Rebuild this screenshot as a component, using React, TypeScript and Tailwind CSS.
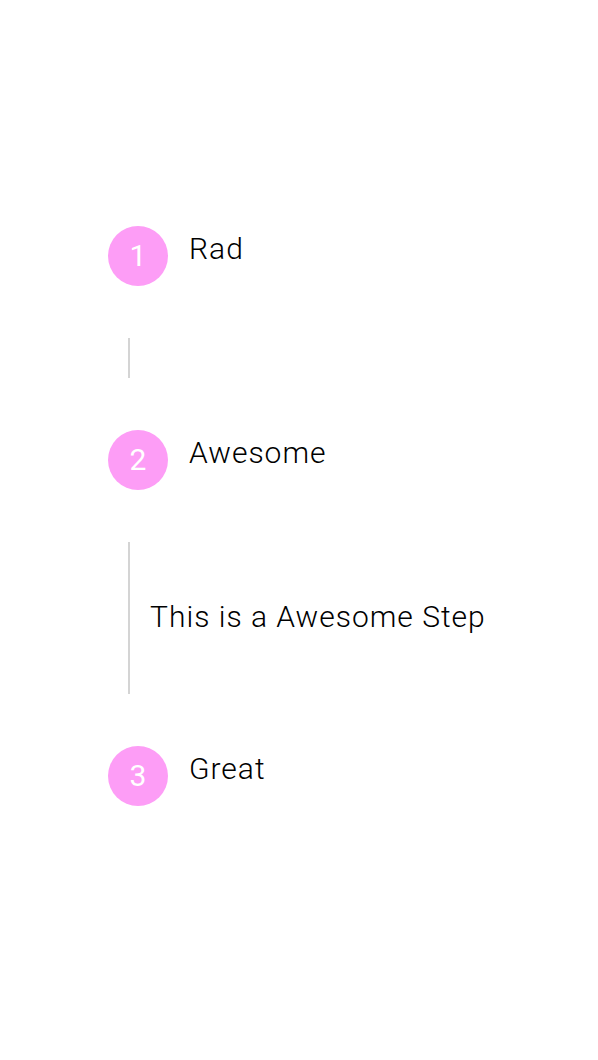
import React from "react";

function Circle({ n }: { n: number }) {
  return (
    <div className="w-[60px] h-[60px] rounded-full bg-[#fd9df6] flex items-center justify-center shrink-0">
      <span className="text-white text-[30px] font-normal leading-none">{n}</span>
    </div>
  );
}

function Step({ n, label }: { n: number; label: string }) {
  return (
    <div className="flex items-start">
      <Circle n={n} />
      <div className="ml-[21px] mt-[5px] text-[30px] font-light text-black tracking-[1px] leading-[normal]">{label}</div>
    </div>
  );
}

export default function App() {
  return (
    <div
      className="min-h-[1060px] bg-white pt-[226px] pl-[108px]"
      style={{ fontFamily: "Roboto, 'Noto Sans', sans-serif" }}
    >
      <Step n={1} label="Rad" />
      <div className="ml-[20px] my-[52px] h-[40px] border-l-2 border-[#d4d4d4]" />
      <Step n={2} label="Awesome" />
      <div className="ml-[20px] my-[52px] h-[152px] border-l-2 border-[#d4d4d4] pl-[20px] pt-[57px]">
        <div className="text-[30px] font-light text-black tracking-[1px] leading-[normal] whitespace-nowrap">
          This is a Awesome Step
        </div>
      </div>
      <Step n={3} label="Great" />
    </div>
  );
}
